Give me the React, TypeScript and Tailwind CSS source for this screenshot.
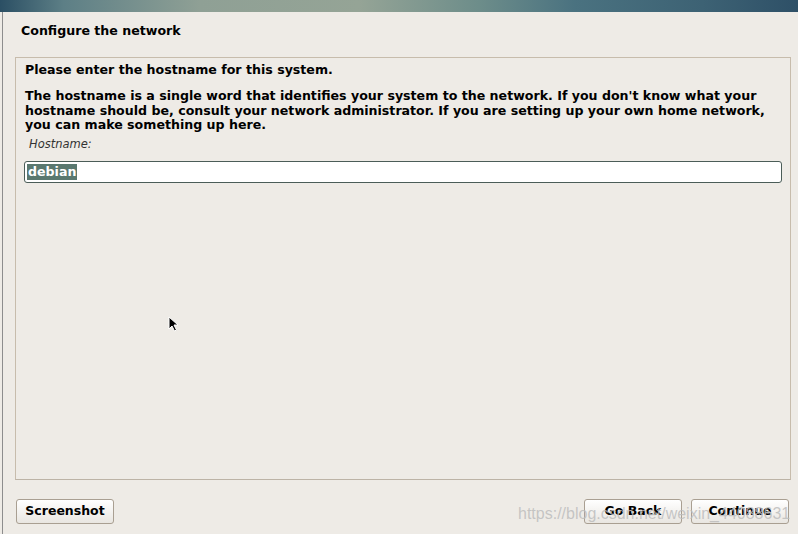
import React from 'react';

const font = { fontFamily: '"DejaVu Sans", Verdana, sans-serif' };

const Button: React.FC<{ label: string }> = ({ label }) => (
  <button className="w-[98px] h-[25px] rounded-[3px] border border-[#a99f92] bg-gradient-to-b from-[#ffffff] to-[#e9e6e1] text-[12.5px] font-bold text-black">
    {label}
  </button>
);

const App: React.FC = () => {
  return (
    <div className="relative w-[798px] h-[534px] overflow-hidden bg-[#eeebe6] flex flex-col text-black" style={font}>
      {/* Banner strip */}
      <div className="h-[12px] shrink-0 bg-[linear-gradient(90deg,#2b4f64_0%,#5d7f86_8%,#8fa095_25%,#95a496_45%,#6d8d8a_60%,#4a7280_72%,#3d6274_88%,#2e5067_100%)]" />

      <div className="ml-[2px] flex-1 flex flex-col border-l border-[#8d8d8d]">
        {/* Title */}
        <h1 className="pl-[18px] pt-[11px] h-[45px] text-[12.6px] font-bold leading-[16px]">Configure the network</h1>

        {/* Main panel */}
        <div className="ml-[12px] mr-[7px] h-[423px] border border-[#c7bcac] border-b-[#bcb3a6] pl-[9px] pr-[8px] pt-[4px]">
          <p className="text-[12.6px] font-bold leading-[15px]">Please enter the hostname for this system.</p>
          <p className="mt-[12px] text-[12.6px] font-bold leading-[14.5px]">
            The hostname is a single word that identifies your system to the network. If you don't know what your hostname should be, consult your network administrator. If you are setting up your own home network, you can make something up here.
          </p>
          <div className="mt-[4px] pl-[4px] text-[11.5px] italic text-[#333] leading-[15px]">Hostname:</div>
          <div className="mt-[9px] -ml-[1px] h-[22px] rounded-[3px] border border-[#4b5d58] bg-white flex items-center px-[2px]">
            <span className="bg-[#5a786f] text-white text-[12.6px] font-bold leading-[16px] px-[1px]">debian</span>
          </div>
        </div>

        {/* Button row */}
        <div className="mt-[19px] ml-[13px] mr-[9px] flex items-center">
          <Button label="Screenshot" />
          <div className="flex-1" />
          <div className="flex gap-[9px]">
            <Button label="Go Back" />
            <Button label="Continue" />
          </div>
        </div>
      </div>

      {/* Watermark over the buttons */}
      <div className="absolute left-[518px] top-[505px] text-[16px] leading-[18px] text-[#bdbdbd]/85 pointer-events-none" style={{ fontFamily: '"Liberation Sans", Arial, sans-serif' }}>
        https://blog.csdn.net/weixin_44088631
      </div>

      {/* Mouse pointer */}
      <svg className="absolute left-[168px] top-[316px]" width="12" height="17" viewBox="0 0 12 17">
        <path d="M1 1 L1 13 L4 10 L6.5 15 L8.5 14 L6 9 L10 9 Z" fill="#000" stroke="#fff" strokeWidth="1" />
      </svg>
    </div>
  );
};

export default App;
